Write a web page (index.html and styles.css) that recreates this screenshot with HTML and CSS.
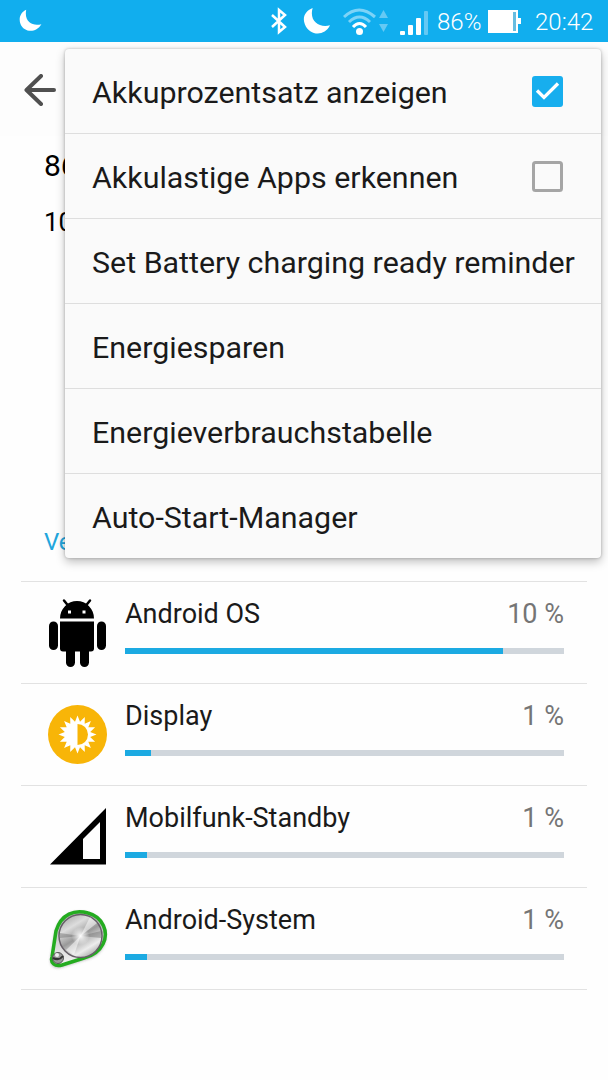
FILE: index.html
```html
<!DOCTYPE html>
<html lang="de">
<head>
  <meta charset="UTF-8">
  <meta name="viewport" content="width=device-width, initial-scale=1.0">
  <title>Akku</title>
  <link rel="stylesheet" href="styles.css">
</head>
<body>
  <header class="status-bar">
    <svg class="moon-small" width="24" height="24" viewBox="0 0 30 30"><path d="M9 1C2 4-1 12 2 19c4 10 19 12 26 0C18 22 6 17 9 1z" fill="#fff"/></svg>
    <div class="status-icons">
      <svg class="bluetooth" width="18" height="28" viewBox="0 0 18 28"><path d="M2 8l13 12-6 5V3l6 5L2 20" fill="none" stroke="#fff" stroke-width="2.5"/></svg>
      <svg class="moon" width="28" height="28" viewBox="0 0 29 29"><path d="M10 1C2 4-1 11 2 18c5 12 20 13 26 1C17 22 6 15 10 1z" fill="#fff"/></svg>
      <svg class="wifi" width="46" height="30" viewBox="0 0 46 30">
        <g fill="none" stroke="#7dd3f7" stroke-width="3">
          <path d="M1 10q15-14 31 0"/>
          <path d="M6 15q10.500-10 21 0"/>
        </g>
        <path d="M10 20q6.500-7 13 0" fill="none" stroke="#fff" stroke-width="3"/>
        <circle cx="16.500" cy="24.500" r="3.500" fill="#fff"/>
        <path d="M36 11l4.500-8 4.500 8zM36 17l4.500 8 4.500-8z" fill="#65c9f4"/>
      </svg>
      <svg class="signal" width="29" height="26" viewBox="0 0 29 26">
        <rect x="0" y="21" width="5" height="4" rx="1" fill="#fff"/>
        <rect x="8" y="15" width="5" height="10" rx="1" fill="#fff"/>
        <rect x="16" y="8" width="5" height="17" rx="1" fill="#fff"/>
        <rect x="24" y="1" width="4" height="24" rx="1" fill="#65c9f4"/>
      </svg>
      <span class="status-percent">86%</span>
      <svg class="battery" width="33" height="23" viewBox="0 0 33 23">
        <path d="M0 0h30v8h3v6h-3v9H0z" fill="#fff"/>
        <rect x="25" y="2" width="3" height="19" fill="#69bde0"/>
      </svg>
      <span class="status-time">20:42</span>
    </div>
  </header>

  <nav class="toolbar">
    <svg width="32" height="32" viewBox="0 0 32 32"><path d="M17 2L2.500 16 17 30M3 16h27" fill="none" stroke="#505050" stroke-width="4" stroke-linecap="round" stroke-linejoin="round"/></svg>
  </nav>

  <main class="content">
    <p class="level">86</p>
    <p class="level-small">10</p>
    <p class="section-title">Ve</p>

    <ul class="usage-list">
      <li class="usage">
        <svg class="usage-icon" width="60" height="70" viewBox="0 0 60 70">
          <path d="M12 20.500a17 17.500 0 0 1 34 0zM12 23.500h34v27q0 3-3 3H15q-3 0-3-3z"/>
          <path d="M16 2.500l4 5M42 2.500l-4 5" stroke="#000" stroke-width="2.500" stroke-linecap="round"/>
          <rect x="1" y="23.500" width="9" height="28.500" rx="4.500"/>
          <rect x="49" y="23.500" width="9" height="28.500" rx="4.500"/>
          <rect x="18" y="45" width="9" height="24" rx="4.500"/>
          <rect x="32" y="45" width="9" height="24" rx="4.500"/>
          <path d="M20 12.500h3v3h-3zM34.500 12.500h3v3h-3z" fill="#fff"/>
        </svg>
        <div class="usage-body">
          <div class="usage-text"><span>Android OS</span><span class="usage-value">10 %</span></div>
          <div class="bar"><div class="bar-fill" style="width: 86%"></div></div>
        </div>
      </li>
      <li class="usage">
        <svg class="usage-icon" width="60" height="70" viewBox="0 0 60 70">
          <circle cx="29.500" cy="34.500" r="29.500" fill="#f8b508"/>
          <g transform="translate(29.500 34.500)">
            <path d="M19 0L12.700 2.500 17.600 7.300 10.800 7.200 13.400 13.400 7.200 10.800 7.300 17.600 2.500 12.700 0 19-2.500 12.700-7.300 17.600-7.200 10.800-13.400 13.400-10.800 7.200-17.600 7.300-12.700 2.500-19 0-12.700-2.500-17.600-7.300-10.800-7.200-13.400-13.400-7.200-10.800-7.300-17.600-2.500-12.700 0-19 2.500-12.700 7.300-17.600 7.200-10.800 13.400-13.400 10.800-7.200 17.600-7.300 12.700-2.500z" fill="#fff"/>
            <path d="M0-10.500a10.500 10.500 0 0 1 0 21z" fill="#f8b508"/>
          </g>
        </svg>
        <div class="usage-body">
          <div class="usage-text"><span>Display</span><span class="usage-value">1 %</span></div>
          <div class="bar"><div class="bar-fill" style="width: 6%"></div></div>
        </div>
      </li>
      <li class="usage">
        <svg class="usage-icon" width="60" height="70" viewBox="0 0 60 70">
          <path d="M58 6v56.500H2zM52 20L35 37v20h17z" fill-rule="evenodd"/>
        </svg>
        <div class="usage-body">
          <div class="usage-text"><span>Mobilfunk-Standby</span><span class="usage-value">1 %</span></div>
          <div class="bar"><div class="bar-fill" style="width: 5%"></div></div>
        </div>
      </li>
      <li class="usage">
        <svg class="usage-icon" width="60" height="70" viewBox="0 0 60 70">
          <defs>
            <linearGradient id="plate" x1="0" y1="0" x2="0" y2="1"><stop offset="0" stop-color="#aaa"/><stop offset="1" stop-color="#f4f4f4"/></linearGradient>
            <linearGradient id="metal" x1="0.200" y1="0" x2="0.800" y2="1"><stop offset="0" stop-color="#aaa"/><stop offset="0.250" stop-color="#ddd"/><stop offset="0.420" stop-color="#b0b0b0"/><stop offset="0.500" stop-color="#999"/><stop offset="0.600" stop-color="#bbb"/><stop offset="0.780" stop-color="#ededed"/><stop offset="1" stop-color="#999"/></linearGradient>
            <radialGradient id="shine"><stop offset="0" stop-color="#fff"/><stop offset="1" stop-color="#fff" stop-opacity="0"/></radialGradient>
            <filter id="soft" x="-20%" y="-20%" width="140%" height="140%"><feGaussianBlur stdDeviation="1.500"/></filter>
          </defs>
          <path d="M7 28C12 10 27 5 40 9c15 4 21 19 16 32-4 9-11 13-20 15L14 63C6 66 1 60 3 54z" fill="#777" opacity="0.600" filter="url(#soft)"/>
          <path d="M8 27C13 10 27 5 40 9c15 4 21 19 15 31-4 8-11 12-19 14L14 61C7 63 2 59 4 53z" fill="url(#plate)" stroke="#24ac20" stroke-width="3.500"/>
          <circle cx="32.500" cy="32" r="21.500" fill="url(#metal)" stroke="#665f67" stroke-width="1.500"/>
          <path d="M32.500 32L12 29v5zM32.500 32L53 27v7z" fill="#666" opacity="0.400"/>
          <path d="M32.500 32L42 13l7 6zM32.500 32L18 46l8 5z" fill="#fff" opacity="0.500"/>
          <circle cx="32.500" cy="32" r="9" fill="url(#shine)"/>
          <circle cx="10" cy="54" r="5.500" fill="#999" stroke="#555"/>
          <path d="M5 54q6 3 10-2" stroke="#333" stroke-width="2" fill="none"/>
          <circle cx="9" cy="51" r="2" fill="#eee"/>
        </svg>
        <div class="usage-body">
          <div class="usage-text"><span>Android-System</span><span class="usage-value">1 %</span></div>
          <div class="bar"><div class="bar-fill" style="width: 5%"></div></div>
        </div>
      </li>
    </ul>
  </main>

  <ul class="menu">
    <li class="menu-item"><span>Akkuprozentsatz anzeigen</span>
      <svg class="checkbox" width="31" height="31" viewBox="0 0 31 31"><rect width="31" height="31" rx="3" fill="#17aeee"/><path d="M5 14.500l7 7L26 7.500" fill="none" stroke="#fff" stroke-width="3.300"/></svg>
    </li>
    <li class="menu-item"><span>Akkulastige Apps erkennen</span>
      <svg class="checkbox" width="31" height="31" viewBox="0 0 31 31"><rect x="1.500" y="1.500" width="28" height="28" rx="2" fill="none" stroke="#a5a5a5" stroke-width="3"/></svg>
    </li>
    <li class="menu-item"><span>Set Battery charging ready reminder</span></li>
    <li class="menu-item"><span>Energiesparen</span></li>
    <li class="menu-item"><span>Energieverbrauchstabelle</span></li>
    <li class="menu-item"><span>Auto-Start-Manager</span></li>
  </ul>
</body>
</html>
```
FILE: styles.css
```css
* {
  box-sizing: border-box;
}
body {
  position: relative;
  margin: 0;
  height: 1080px;
  overflow: hidden;
  background-color: #fefefe;
  color: #1a1a1a;
  font-family: Roboto, Arial, sans-serif;
}
ul, p {
  margin: 0;
  padding: 0;
  list-style: none;
}
svg {
  display: block;
  flex-shrink: 0;
}
.status-bar {
  display: flex;
  justify-content: space-between;
  height: 42px;
  padding: 0 14px 0 19px;
  background-color: #11aeee;
  color: #fff;
}
.moon-small {
  margin-top: 9px;
}
.status-icons {
  display: flex;
  align-items: flex-start;
  font-size: 24px;
  font-weight: 300;
  line-height: 28px;
}
.bluetooth {
  margin: 7px 15px 0 0;
}
.moon {
  margin: 7px 12px 0 0;
}
.wifi {
  margin: 7px 11px 0 0;
}
.signal {
  margin: 10px 8px 0 0;
}
.status-percent {
  margin: 8px 8px 0 0;
  width: 43px;
}
.battery {
  margin: 10px 14px 0 0;
}
.status-time {
  margin-top: 8px;
  width: 59px;
}
.toolbar {
  height: 94px;
  padding: 32px 0 0 24px;
  background-color: #fdfdfd;
}
.content {
  padding: 0 21px;
}
.level {
  height: 60px;
  padding-left: 23px;
  color: #000;
  font-size: 30px;
  line-height: 60px;
}
.level-small {
  height: 50px;
  padding-left: 23px;
  color: #000;
  font-size: 26px;
  line-height: 52px;
}
.section-title {
  height: 80px;
  margin-top: 255px;
  padding-left: 23px;
  color: #22a6dd;
  font-size: 24px;
  line-height: 82px;
}
.usage-list {
  border-top: 1px solid #e2e2e2;
}
.usage {
  display: flex;
  height: 102px;
  padding: 16px 23px 0 27px;
  border-bottom: 1px solid #e2e2e2;
}
.usage-icon {
  margin-right: 17px;
}
.usage-body {
  flex: 1;
}
.usage-text {
  display: flex;
  justify-content: space-between;
  height: 50px;
  font-size: 27px;
  line-height: 32px;
}
.usage-value {
  color: #757575;
}
.bar {
  height: 6px;
  background-color: #d0d6dc;
}
.bar-fill {
  height: 6px;
  background-color: #1caae2;
}
.menu {
  position: absolute;
  top: 49px;
  left: 65px;
  width: 536px;
  border-radius: 4px;
  background-color: #fafafa;
  box-shadow: 0 4px 10px rgba(0, 0, 0, 0.25), 0 0 3px rgba(0, 0, 0, 0.25);
}
.menu-item {
  display: flex;
  align-items: center;
  justify-content: space-between;
  height: 85px;
  padding: 3px 38px 0 27px;
  border-bottom: 1px solid #dedede;
  font-size: 30.4px;
  white-space: nowrap;
}
.menu-item:last-child {
  height: 84px;
  border-bottom: none;
}
.checkbox {
  margin-bottom: 2px;
}
```
